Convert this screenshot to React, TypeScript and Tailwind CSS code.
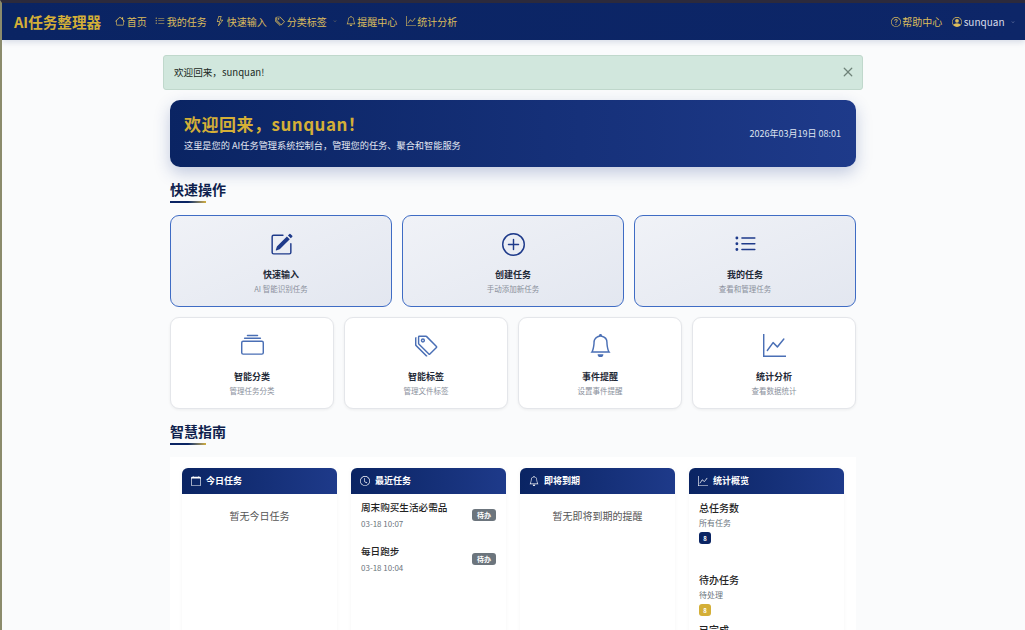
import * as React from "react";
import {
  BsBell,
  BsCalendar,
  BsChevronDown,
  BsClock,
  BsCollection,
  BsGraphUp,
  BsHouse,
  BsLightning,
  BsListUl,
  BsPencilSquare,
  BsPersonCircle,
  BsPlusCircle,
  BsQuestionCircle,
  BsTags,
  BsX,
} from "react-icons/bs";

const navLinks = [
  { icon: BsHouse, label: "首页" },
  { icon: BsListUl, label: "我的任务" },
  { icon: BsLightning, label: "快速输入" },
  { icon: BsTags, label: "分类标签", caret: true },
  { icon: BsBell, label: "提醒中心" },
  { icon: BsGraphUp, label: "统计分析" },
];

const primaryActions = [
  { icon: BsPencilSquare, title: "快速输入", desc: "AI 智能识别任务" },
  { icon: BsPlusCircle, title: "创建任务", desc: "手动添加新任务" },
  { icon: BsListUl, title: "我的任务", desc: "查看和管理任务" },
];

const secondaryActions = [
  { icon: BsCollection, title: "智能分类", desc: "管理任务分类" },
  { icon: BsTags, title: "智能标签", desc: "管理文件标签" },
  { icon: BsBell, title: "事件提醒", desc: "设置事件提醒" },
  { icon: BsGraphUp, title: "统计分析", desc: "查看数据统计" },
];

const recentTasks = [
  { title: "周末购买生活必需品", time: "03-18 10:07" },
  { title: "每日跑步", time: "03-18 10:04" },
];

function SectionTitle({ children, className }: { children: string; className: string }) {
  return (
    <div className={className}>
      <h2 className="text-[14px] leading-[20px] font-bold text-[#0f1f4d]">{children}</h2>
      <div className="mt-[2px] h-[2px] w-[36px] bg-gradient-to-r from-[#0a2463] from-50% to-[#d4af37]" />
    </div>
  );
}

function PanelHead({ icon: Icon, title }: { icon: React.ElementType; title: string }) {
  return (
    <div className="flex h-[26px] items-center gap-[5px] rounded-t-[6px] bg-gradient-to-r from-[#0a2463] to-[#1e3a8a] px-[9px] text-[9px] font-bold text-white">
      <Icon className="text-[10px]" />
      <span>{title}</span>
    </div>
  );
}

function StatBlock({ title, sub, value, badge, className }: { title: string; sub: string; value: string; badge: string; className: string }) {
  return (
    <div className={className}>
      <div className="text-[10px] leading-[14px] font-medium text-[#222]">{title}</div>
      <div className="mt-[2px] text-[8px] leading-[12px] text-[#6c757d]">{sub}</div>
      <span className={`mt-[3px] flex h-[12px] w-[12px] items-center justify-center rounded-[3px] text-[6px] font-bold ${badge}`}>{value}</span>
    </div>
  );
}

export default function App() {
  return (
    <div className="h-[630px] w-[1025px] overflow-hidden border-t-[3px] border-l-2 border-t-[#2c2a3c] border-l-[#8b8b6c] bg-[#fafbfc] font-['Noto_Sans_CJK_SC','Liberation_Sans',sans-serif]">
      <nav className="flex h-[37px] items-center justify-between bg-gradient-to-r from-[#0a2463] to-[#0d2668] pr-[10px] pl-[12px] shadow-[0_2px_6px_rgba(10,36,99,0.15)]">
        <div className="flex items-center">
          <span className="mr-[14px] text-[14.6px] font-bold whitespace-nowrap text-[#d4af37]">AI任务整理器</span>
          <div className="flex items-center gap-[8.5px]">
            {navLinks.map((link) => (
              <span key={link.label} className="flex items-center gap-[1.5px] text-[10px] whitespace-nowrap text-[#dcbc5c]">
                <link.icon className="text-[10px]" />
                {link.label}
                {link.caret ? <BsChevronDown className="ml-[5px] text-[4px]" /> : null}
              </span>
            ))}
          </div>
        </div>
        <div className="flex items-center gap-[10px] text-[10px] text-[#dcbc5c]">
          <span className="flex items-center gap-[1.5px]"><BsQuestionCircle className="text-[10px]" />帮助中心</span>
          <span className="flex items-center gap-[1.5px]">
            <BsPersonCircle className="text-[10px]" />
            <span className="text-[#d8dce8]">sunquan</span>
            <BsChevronDown className="ml-[5px] text-[4px] text-[#d8dce8]" />
          </span>
        </div>
      </nav>

      <main className="mr-[160px] ml-[161px] flex w-[700px] flex-col">
        <div className="mt-[15px] flex h-[35px] items-center justify-between rounded-[3px] border border-[#c0d8cc] bg-[#d1e7dd] pr-[4px] pb-[1px] pl-[10px] text-[9.6px] text-[#1a2a24]">
          <span>欢迎回来，sunquan!</span>
          <BsX className="text-[20px] text-[#6f8379]" />
        </div>

        <div className="mx-[7px] mt-[10px] flex h-[67px] items-center justify-between rounded-[10px] bg-gradient-to-r from-[#0a2463] to-[#1e3a8a] pr-[15px] pl-[14px] shadow-[0_6px_16px_rgba(30,58,138,0.25)]">
          <div className="pb-[3px]">
            <div className="text-[17px] leading-[22px] font-bold tracking-[0.5px] text-[#d4af37]">欢迎回来，sunquan！</div>
            <div className="mt-[4px] text-[9.2px] leading-[13px] text-[#e4e8f2]">这里是您的 AI任务管理系统控制台，管理您的任务、聚合和智能服务</div>
          </div>
          <div className="text-[9px] text-[#dfe4f0]">2026年03月19日 08:01</div>
        </div>

        <SectionTitle className="mx-[7px] mt-[12px]">快速操作</SectionTitle>

        <div className="mx-[7px] mt-[12px] grid grid-cols-3 gap-[10px]">
          {primaryActions.map((a) => (
            <div key={a.title} className="flex h-[92px] flex-col items-center rounded-[9px] border border-[#3f6cc4] bg-gradient-to-br from-[#f0f2f7] to-[#e3e7f0] pt-[17px]">
              <a.icon className="text-[23px] text-[#1e3a8a]" />
              <div className="mt-[12px] text-[9px] leading-[13px] font-bold text-[#1f2937]">{a.title}</div>
              <div className="mt-[2px] text-[7.5px] leading-[11px] text-[#8a909c]">{a.desc}</div>
            </div>
          ))}
        </div>

        <div className="mx-[7px] mt-[10px] grid grid-cols-4 gap-[10px]">
          {secondaryActions.map((a) => (
            <div key={a.title} className="flex h-[92px] flex-col items-center rounded-[9px] border border-[#e4e6ea] bg-white pt-[16px] shadow-[0_1px_3px_rgba(0,0,0,0.06)]">
              <a.icon className="text-[23px] text-[#4a6fb5]" />
              <div className="mt-[13px] text-[9px] leading-[13px] font-bold text-[#1f2937]">{a.title}</div>
              <div className="mt-[2px] text-[7.5px] leading-[11px] text-[#8a909c]">{a.desc}</div>
            </div>
          ))}
        </div>

        <SectionTitle className="mx-[7px] mt-[12px]">智慧指南</SectionTitle>

        <div className="mx-[7px] mt-[12px] grid h-[300px] grid-cols-4 gap-[14px] bg-white px-[12px] pt-[11px]">
          <div className="bg-white shadow-[0_1px_4px_rgba(0,0,0,0.04)]">
            <PanelHead icon={BsCalendar} title="今日任务" />
            <div className="pt-[14px] text-center text-[10px] leading-[16px] text-[#555]">暂无今日任务</div>
          </div>

          <div className="bg-white shadow-[0_1px_4px_rgba(0,0,0,0.04)]">
            <PanelHead icon={BsClock} title="最近任务" />
            <div className="flex flex-col gap-[14px] px-[10px] pt-[6px]">
              {recentTasks.map((t) => (
                <div key={t.title} className="flex items-center justify-between">
                  <div>
                    <div className="text-[9.6px] leading-[14px] font-medium text-[#222]">{t.title}</div>
                    <div className="mt-[4px] text-[8px] leading-[12px] text-[#6c757d]">{t.time}</div>
                  </div>
                  <span className="rounded-[3px] bg-[#6c757d] px-[5px] text-[7px] leading-[12px] font-bold text-white">待办</span>
                </div>
              ))}
            </div>
          </div>

          <div className="bg-white shadow-[0_1px_4px_rgba(0,0,0,0.04)]">
            <PanelHead icon={BsBell} title="即将到期" />
            <div className="pt-[14px] text-center text-[10px] leading-[16px] text-[#555]">暂无即将到期的提醒</div>
          </div>

          <div className="bg-white shadow-[0_1px_4px_rgba(0,0,0,0.04)]">
            <PanelHead icon={BsGraphUp} title="统计概览" />
            <div className="px-[10px] pt-[7px]">
              <StatBlock title="总任务数" sub="所有任务" value="8" badge="bg-[#0a2463] text-white" className="h-[72px]" />
              <StatBlock title="待办任务" sub="待处理" value="8" badge="bg-[#d4af37] text-white" className="h-[50px]" />
              <StatBlock title="已完成" sub="已完成" value="0" badge="bg-[#198754] text-white" className="h-[47px]" />
            </div>
          </div>
        </div>
      </main>
    </div>
  );
}
